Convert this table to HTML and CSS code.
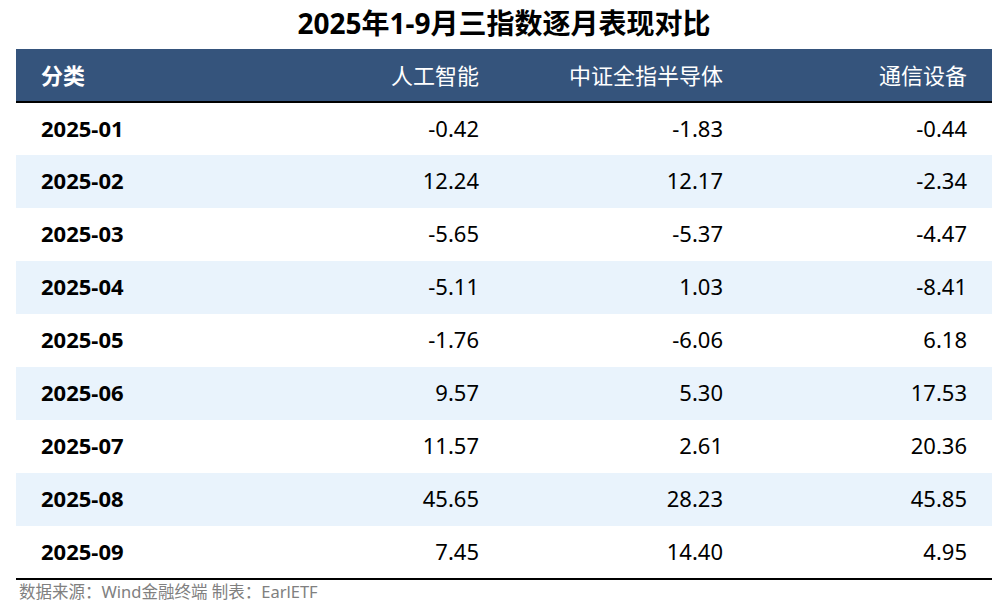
FILE: index.html
```html
<!DOCTYPE html>
<html lang="zh">
<head>
<meta charset="utf-8">
<link rel="stylesheet" href="styles.css">
</head>
<body>
<div class="page">
  <h1 class="title">2025年1-9月三指数逐月表现对比</h1>
  <table class="grid">
    <thead>
      <tr><th class="cat">分类</th><th>人工智能</th><th>中证全指半导体</th><th>通信设备</th></tr>
    </thead>
    <tbody>
      <tr><td class="cat">2025-01</td><td>-0.42</td><td>-1.83</td><td>-0.44</td></tr>
      <tr><td class="cat">2025-02</td><td>12.24</td><td>12.17</td><td>-2.34</td></tr>
      <tr><td class="cat">2025-03</td><td>-5.65</td><td>-5.37</td><td>-4.47</td></tr>
      <tr><td class="cat">2025-04</td><td>-5.11</td><td>1.03</td><td>-8.41</td></tr>
      <tr><td class="cat">2025-05</td><td>-1.76</td><td>-6.06</td><td>6.18</td></tr>
      <tr><td class="cat">2025-06</td><td>9.57</td><td>5.30</td><td>17.53</td></tr>
      <tr><td class="cat">2025-07</td><td>11.57</td><td>2.61</td><td>20.36</td></tr>
      <tr><td class="cat">2025-08</td><td>45.65</td><td>28.23</td><td>45.85</td></tr>
      <tr><td class="cat">2025-09</td><td>7.45</td><td>14.40</td><td>4.95</td></tr>
    </tbody>
  </table>
  <div class="source">数据来源：Wind金融终端 制表：EarlETF</div>
</div>
</body>
</html>
```
FILE: styles.css
```css
html, body {
  margin: 0;
  padding: 0;
  background: #ffffff;
}
body {
  font-family: "Noto Sans", "Noto Sans CJK SC", sans-serif;
  color: #000;
}
.page {
  width: 976px;
  padding: 0 16px;
}
.title {
  margin: 0;
  height: 49px;
  line-height: 46px;
  font-size: 28px;
  font-weight: 700;
  text-align: center;
}
.grid {
  width: 976px;
  border-collapse: collapse;
  table-layout: fixed;
  border-bottom: 2px solid #000;
}
.grid th, .grid td {
  box-sizing: border-box;
  width: 244px;
  padding: 0 25px 3px;
  text-align: right;
  font-size: 22px;
}
.grid th {
  height: 53px;
  background: #35547c;
  color: #fff;
  font-weight: 400;
  border-bottom: 2px solid #000;
}
.grid td {
  height: 53px;
}
.grid .cat {
  text-align: left;
  font-weight: 700;
}
.grid tbody tr:nth-child(even) td {
  background: #e9f3fc;
}
.source {
  padding: 1px 3px 0;
  font-size: 16.5px;
  line-height: 22px;
  color: #808080;
}
```
